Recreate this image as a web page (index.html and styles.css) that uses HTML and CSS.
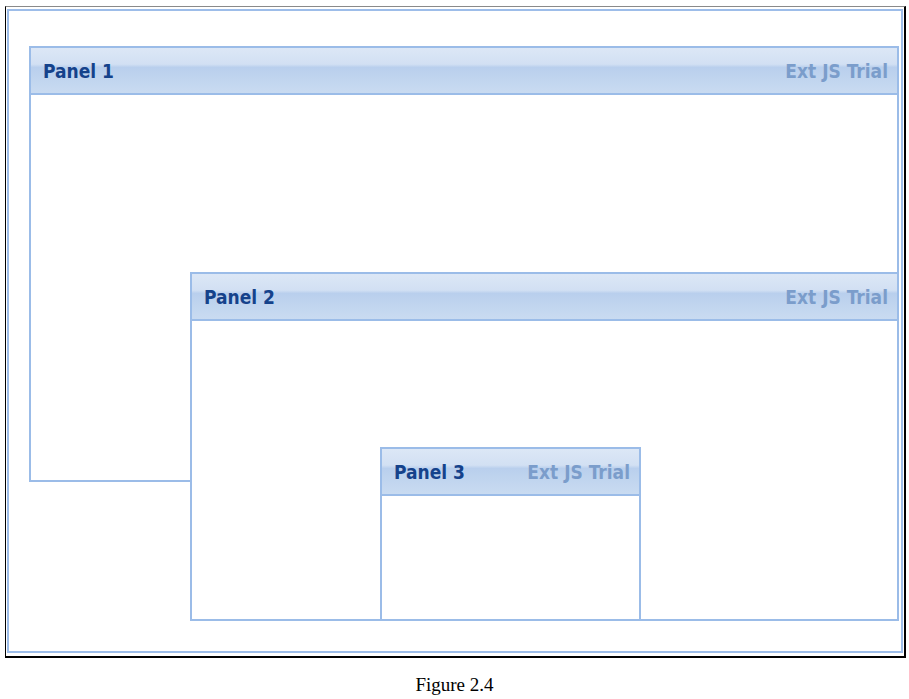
FILE: index.html
```html
<!DOCTYPE html>
<html lang="en">
<head>
    <meta charset="UTF-8">
    <meta name="viewport" content="width=device-width, initial-scale=1.0">
    <title>Figure 2.4 - Absolute layout</title>
    <link rel="stylesheet" href="styles.css">
</head>
<body>
    <div class="frame">
        <div class="viewport">
            <div class="panel panel-1">
                <div class="panel-header">
                    <span class="panel-title">Panel 1</span>
                    <span class="panel-trial">Ext JS Trial</span>
                </div>
                <div class="panel-body"></div>
            </div>
            <div class="panel panel-2">
                <div class="panel-header">
                    <span class="panel-title">Panel 2</span>
                    <span class="panel-trial">Ext JS Trial</span>
                </div>
                <div class="panel-body"></div>
            </div>
            <div class="panel panel-3">
                <div class="panel-header">
                    <span class="panel-title">Panel 3</span>
                    <span class="panel-trial">Ext JS Trial</span>
                </div>
                <div class="panel-body"></div>
            </div>
        </div>
    </div>
    <p class="caption">Figure 2.4</p>
</body>
</html>
```

FILE: styles.css
```css
body {
    margin: 0;
    background-color: #fff;
    font-family: "DejaVu Sans", Verdana, sans-serif;
}
.frame {
    margin: 6px 0 0 5px;
    width: 896px;
    height: 646px;
    border: 1px solid #000;
    border-top-color: #8a8a8a;
    border-right-width: 2px;
    border-bottom-width: 2px;
    padding: 2px 1px 1px 1px;
}
/* absolute layout container: panels sit at their x/y */
.viewport {
    position: relative;
    height: 640px;
    border: 2px solid #9dbde9;
    overflow: hidden;
    background-color: #fff;
}
.panel {
    position: absolute;
    display: flex;
    flex-direction: column;
    box-sizing: border-box;
    border: 2px solid #9bbce8;
    background-color: #fff;
    overflow: hidden;
}
.panel-1 {
    left: 20px;
    top: 35px;
    width: 870px;
    height: 436px;
}
.panel-2 {
    left: 181px;
    top: 261px;
    width: 709px;
    height: 349px;
}
.panel-3 {
    left: 371px;
    top: 436px;
    width: 261px;
    height: 174px;
}
.panel-header {
    display: flex;
    justify-content: space-between;
    align-items: center;
    height: 44px;
    padding: 1px 9px 0 12px;
    border-bottom: 2px solid #9bbce8;
    background: linear-gradient(to bottom, #dce7f6 0%, #d2e0f3 36%, #b9cfed 43%, #bed3ee 60%, #c9dbf1 100%);
}
.panel-title {
    color: #15428b;
    font-family: "DejaVu Sans Condensed", "DejaVu Sans", sans-serif;
    font-weight: bold;
    font-size: 19px;
}
.panel-trial {
    color: #7b9dcb;
    font-family: "DejaVu Sans Condensed", "DejaVu Sans", sans-serif;
    font-weight: bold;
    font-size: 19px;
}
.panel-body {
    flex: 1;
    background-color: #fff;
}
.caption {
    margin: 16px 0 0;
    text-align: center;
    font-family: "Liberation Serif", "Times New Roman", serif;
    font-size: 19px;
    line-height: 22px;
    color: #000;
}
```
